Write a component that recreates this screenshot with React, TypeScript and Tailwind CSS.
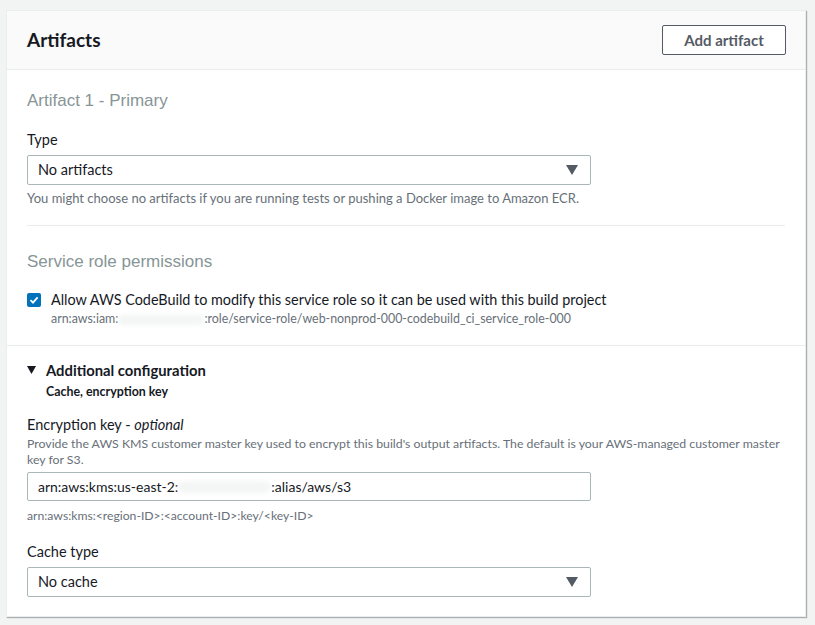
import React from "react";

const ember = { fontFamily: "Lato, 'Open Sans', Arial, sans-serif" };
const helv = { fontFamily: "'Liberation Sans', Arial, sans-serif" };

function Caret() {
  return (
    <svg width="12" height="10" viewBox="0 0 12 10" className="shrink-0">
      <path d="M0 0 L12 0 L6 10 Z" fill="#545b64" />
    </svg>
  );
}

function Select({ value }: { value: string }) {
  return (
    <div className="w-[564px] h-[30px] border border-[#aab7b8] rounded-[2px] bg-white flex items-center justify-between pl-[10px] pr-[12px]">
      <span className="text-[14.5px] text-[#16191f]">{value}</span>
      <Caret />
    </div>
  );
}

export default function App() {
  return (
    <div className="min-h-[625px] w-[815px] bg-[#f2f3f3] pt-[10px] pl-[6px]" style={ember}>
      <div className="w-[800px] bg-white border border-[#eaeded] shadow-[1px_1px_1px_0_rgba(0,28,36,0.3)]">
        {/* Header */}
        <div className="h-[59px] bg-[#fafafa] border-b border-[#eaeded] flex items-center justify-between pl-[20px] pr-[19px]">
          <h2 className="text-[19px] font-bold text-[#16191f]">Artifacts</h2>
          <button className="w-[124px] h-[30px] border border-[#545b64] rounded-[2px] bg-white text-[15px] font-bold text-[#545b64]">
            Add artifact
          </button>
        </div>

        {/* Artifact 1 */}
        <div className="px-[20px]">
          <div className="pt-[19px] text-[17px] leading-[24px] text-[#879596]" style={helv}>
            Artifact 1 - Primary
          </div>
          <div className="mt-[17px] text-[14.5px] leading-[20px] text-[#16191f]">Type</div>
          <div className="mt-[5px]">
            <Select value="No artifacts" />
          </div>
          <div className="mt-[5px] text-[13px] leading-[16px] text-[#687078]">
            You might choose no artifacts if you are running tests or pushing a Docker image to Amazon ECR.
          </div>
          <div className="mt-[19px] border-t border-[#eaeded]" />
          <div className="mt-[24px] text-[17px] leading-[24px] text-[#879596]" style={helv}>
            Service role permissions
          </div>
          <div className="mt-[16px] flex items-start gap-[10px]">
            <div className="mt-[3px] w-[14px] h-[14px] rounded-[2px] bg-[#0073bb] flex items-center justify-center">
              <svg width="10" height="10" viewBox="0 0 10 10">
                <path d="M1.5 5.2 L4 7.6 L8.6 2.4" stroke="white" strokeWidth="1.8" fill="none" />
              </svg>
            </div>
            <div>
              <div className="text-[14.4px] leading-[20px] text-[#16191f]">
                Allow AWS CodeBuild to modify this service role so it can be used with this build project
              </div>
              <div className="text-[12.4px] leading-[16px] text-[#687078] mt-[1px]">
                arn:aws:iam:<span className="inline-block w-[86px] h-[10px] align-middle bg-[#f4f5f5] rounded-full blur-[2px]" />:role/service-role/web-nonprod-000-codebuild_ci_service_role-000
              </div>
            </div>
          </div>
        </div>
        <div className="mt-[18px] border-t border-[#eaeded]" />

        {/* Additional configuration */}
        <div className="px-[20px] pb-[19px]">
          <div className="mt-[14px] flex items-center gap-[10px]">
            <svg width="9" height="8" viewBox="0 0 9 8">
              <path d="M0 0 L9 0 L4.5 8 Z" fill="#16191f" />
            </svg>
            <span className="text-[14.8px] leading-[20px] font-bold text-[#16191f]">Additional configuration</span>
          </div>
          <div className="ml-[19px] mt-[4px] text-[12.4px] leading-[16px] font-bold text-[#16191f]">
            Cache, encryption key
          </div>
          <div className="mt-[15px] text-[14.5px] leading-[20px] text-[#16191f]">
            Encryption key - <i>optional</i>
          </div>
          <div className="mt-[1px] text-[12.3px] leading-[16px] text-[#687078] w-[760px]">
            Provide the AWS KMS customer master key used to encrypt this build's output artifacts. The default is your AWS-managed customer master key for S3.
          </div>
          <div className="mt-[4px] w-[564px] h-[29px] border border-[#aab7b8] rounded-[2px] bg-white flex items-center pl-[10px] text-[14px] text-[#16191f]">
            arn:aws:kms:us-east-2:<span className="inline-block w-[93px] h-[12px] bg-[#f4f5f5] rounded-full blur-[2px]" />:alias/aws/s3
          </div>
          <div className="mt-[7px] text-[12.2px] leading-[16px] text-[#687078]">
            arn:aws:kms:&lt;region-ID&gt;:&lt;account-ID&gt;:key/&lt;key-ID&gt;
          </div>
          <div className="mt-[18px] text-[14.5px] leading-[20px] text-[#16191f]">Cache type</div>
          <div className="mt-[5px]">
            <Select value="No cache" />
          </div>
        </div>
      </div>
    </div>
  );
}
